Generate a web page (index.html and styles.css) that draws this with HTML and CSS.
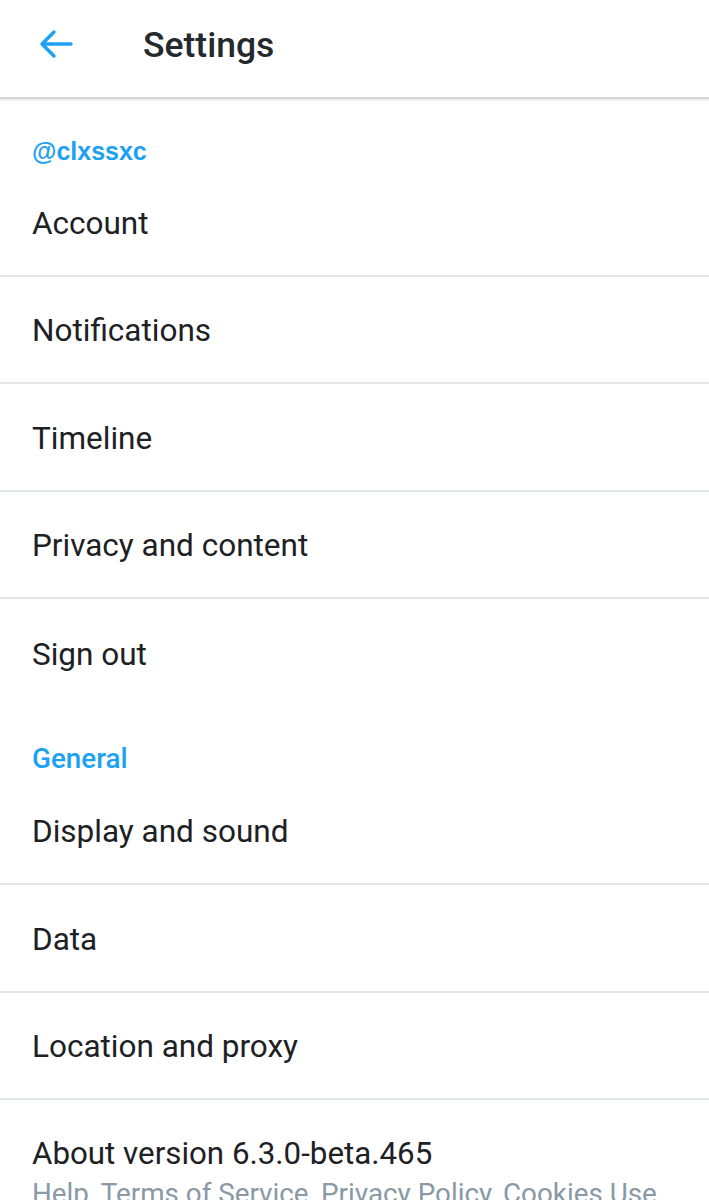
FILE: index.html
```html
<!DOCTYPE html>
<html>
<head>
<meta charset="utf-8">
<link rel="stylesheet" href="styles.css">
</head>
<body>
<div class="app">
  <header class="topbar">
    <div class="back">
      <svg width="34" height="30" viewBox="0 0 34 30"><path d="M32 15H3M15 3L3 15L15 27" fill="none" stroke="#1da1f2" stroke-width="3.4" stroke-linecap="round" stroke-linejoin="round"/></svg>
    </div>
    <h1 class="title">Settings</h1>
  </header>
  <div class="section-head handle">@clxssxc</div>
  <div class="row">Account</div>
  <div class="row">Notifications</div>
  <div class="row">Timeline</div>
  <div class="row">Privacy and content</div>
  <div class="row last">Sign out</div>
  <div class="section-head general">General</div>
  <div class="row">Display and sound</div>
  <div class="row">Data</div>
  <div class="row">Location and proxy</div>
  <div class="about">
    <div class="about-title">About version 6.3.0-beta.465</div>
    <div class="links">Help, Terms of Service, Privacy Policy, Cookies Use</div>
  </div>
</div>
</body>
</html>
```

FILE: styles.css
```css
* { box-sizing: border-box; }
html, body { margin: 0; padding: 0; background: #fff; }
body { font-family: Roboto, "Noto Sans", sans-serif; color: #1d2124; overflow: hidden; height: 1200px; }
.app { width: 709px; }
.topbar {
  height: 99px;
  display: flex;
  align-items: center;
  border-bottom: 2px solid #d6d6d6;
  box-shadow: 0 1px 2px rgba(0,0,0,0.12);
  padding-left: 39px;
}
.back { width: 34px; height: 30px; display: flex; margin-top: -10px; }
.title {
  margin: -8px 0 0 70px;
  font-size: 35.5px;
  font-weight: 500;
  color: #24292e;
}
.section-head {
  padding-left: 32px;
  color: #1da1f2;
}
.handle {
  height: 70px;
  font-family: "Liberation Sans", Arial, sans-serif;
  font-weight: 700;
  font-size: 25px;
  line-height: 30px;
  padding-top: 37px;
}
.general {
  height: 71px;
  font-size: 27.8px;
  font-weight: 500;
  line-height: 34px;
  padding-top: 35px;
}
.row {
  height: 107.5px;
  display: flex;
  align-items: center;
  padding-left: 32px;
  padding-top: 3px;
  font-size: 31.5px;
  border-bottom: 2px solid #e3e7ea;
  color: #1d2124;
}
.row.last { border-bottom: none; }
.about { padding: 35px 0 0 32px; }
.about-title { font-size: 31.3px; line-height: 38px; }
.links { font-size: 27.8px; color: #8a99a6; line-height: 34px; margin-top: 4px; white-space: nowrap; }
```
